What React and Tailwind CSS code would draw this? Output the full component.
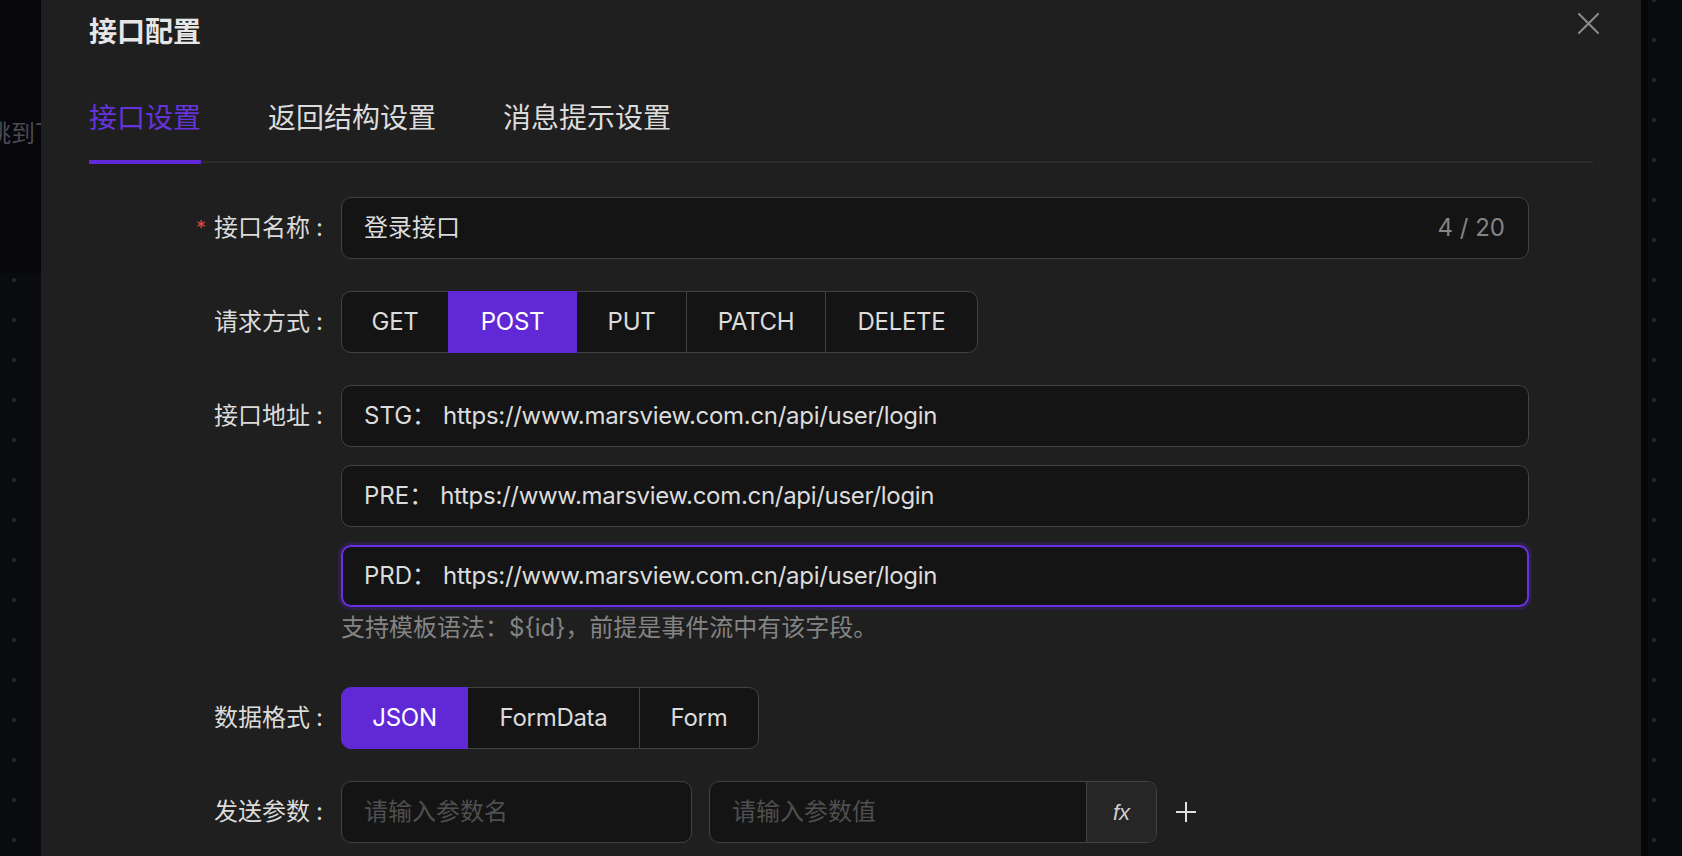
import React from "react";

const FONT = { fontFamily: '"Inter", "Noto Sans CJK SC", sans-serif' };

function Label({ children, required }) {
  return (
    <div className="w-[234px] h-[62px] shrink-0 flex items-center justify-end text-[24px] leading-[36px] text-[#dcdcdc]">
      {required && (
        <span className="text-[#dc4446] text-[20px] mr-[8px] leading-none">*</span>
      )}
      <span>{children}</span>
      <span className="ml-[6px]">:</span>
    </div>
  );
}

function Segmented({ items, active, widths }) {
  return (
    <div className="flex h-[62px]">
      {items.map((it, i) => {
        const sel = it === active;
        const first = i === 0;
        const last = i === items.length - 1;
        return (
          <div
            key={it}
            className={
              "h-[62px] flex items-center justify-center border text-[24px] tracking-[-0.3px] " +
              (first ? "rounded-l-[10px] " : "ml-[-1px] ") +
              (last ? "rounded-r-[10px] " : "") +
              (sel
                ? "relative z-10 bg-[#6129d6] border-[#6129d6] text-white "
                : "bg-[#141414] border-[#424242] text-[#dcdcdc] ")
            }
            style={{ width: widths[i] }}
          >
            {it}
          </div>
        );
      })}
    </div>
  );
}

function UrlInput({ prefix, focused }) {
  return (
    <div
      className={
        "h-[62px] w-[1188px] rounded-[10px] bg-[#141414] flex items-center text-[24px] text-[#dcdcdc] " +
        (focused
          ? "border-2 border-[#6a2fe6] px-[21px] shadow-[0_0_0_3px_rgba(106,47,230,0.18)]"
          : "border border-[#424242] px-[22px]")
      }
    >
      <span className="mr-[7px]">{prefix}：</span>
      <span className="tracking-[-0.3px]">https://www.marsview.com.cn/api/user/login</span>
    </div>
  );
}

export default function App() {
  return (
    <div
      className="w-[1682px] h-[856px] flex overflow-hidden bg-[#0a0b0f] bg-[radial-gradient(circle,#25262b_1.6px,transparent_2.2px)] bg-[length:40px_40px] bg-[position:-6px_-20px]"
      style={FONT}
    >
      {/* left background strip */}
      <div className="w-[41px] shrink-0 flex flex-col">
        <div className="h-[273px] bg-[#07060b] overflow-hidden pt-[116px]">
          <div className="whitespace-nowrap ml-[-13px] text-[24px] leading-[36px] text-[#4a4a4f]">
            跳到下一步
          </div>
        </div>
      </div>

      {/* modal */}
      <div className="relative w-[1600px] shrink-0 h-full bg-[#1f1f1f] px-[48px]">
        <button className="absolute top-[13px] right-[42px] w-[21px] h-[21px]">
          <svg width="21" height="21" viewBox="0 0 21 21" fill="none">
            <path d="M1 1L20 20M20 1L1 20" stroke="#8c8c8c" strokeWidth="2" strokeLinecap="round" />
          </svg>
        </button>

        <div className="pt-[12px] h-[52px] text-[28px] leading-[40px] font-semibold text-[#e6e6e6]">
          接口配置
        </div>

        {/* tabs */}
        <div className="mt-[46px] flex gap-[67px] border-b-2 border-[#2b2b2b] text-[28px] leading-[40px]">
          <div className="relative pb-[23px] text-[#6633dd]">
            接口设置
            <div className="absolute left-0 right-0 bottom-[-3px] h-[4px] bg-[#6129d6]" />
          </div>
          <div className="pb-[23px] text-[#dcdcdc]">返回结构设置</div>
          <div className="pb-[23px] text-[#dcdcdc]">消息提示设置</div>
        </div>

        {/* form */}
        <div className="mt-[34px] flex flex-col">
          {/* row 1 */}
          <div className="flex items-center gap-[18px]">
            <Label required>接口名称</Label>
            <div className="h-[62px] w-[1188px] rounded-[10px] border border-[#424242] bg-[#141414] flex items-center justify-between pl-[22px] pr-[23px] text-[24px]">
              <span className="text-[#dcdcdc]">登录接口</span>
              <span className="text-[#848484]">4 / 20</span>
            </div>
          </div>

          {/* row 2 */}
          <div className="mt-[32px] flex items-center gap-[18px]">
            <Label>请求方式</Label>
            <Segmented
              items={["GET", "POST", "PUT", "PATCH", "DELETE"]}
              active="POST"
              widths={[108, 129, 111, 140, 153]}
            />
          </div>

          {/* row 3 */}
          <div className="mt-[32px] flex items-start gap-[18px]">
            <Label>接口地址</Label>
            <div className="flex flex-col">
              <div className="flex flex-col gap-[18px]">
                <UrlInput prefix="STG" />
                <UrlInput prefix="PRE" />
                <UrlInput prefix="PRD" focused />
              </div>
              <div className="mt-[3px] text-[24px] leading-[36px] text-[#848484]">
                支持模板语法：${"{id}"}，前提是事件流中有该字段。
              </div>
            </div>
          </div>

          {/* row 4 */}
          <div className="mt-[41px] flex items-center gap-[18px]">
            <Label>数据格式</Label>
            <Segmented
              items={["JSON", "FormData", "Form"]}
              active="JSON"
              widths={[127, 173, 120]}
            />
          </div>

          {/* row 5 */}
          <div className="mt-[32px] flex items-center gap-[18px]">
            <Label>发送参数</Label>
            <div className="flex items-center">
              <div className="h-[62px] w-[351px] rounded-[10px] border border-[#424242] bg-[#141414] flex items-center px-[22px] text-[24px] text-[#4f4f4f]">
                请输入参数名
              </div>
              <div className="ml-[17px] h-[62px] w-[448px] rounded-[10px] border border-[#424242] bg-[#141414] flex overflow-hidden">
                <div className="flex-1 flex items-center px-[22px] text-[24px] text-[#4f4f4f]">
                  请输入参数值
                </div>
                <div className="w-[70px] border-l border-[#424242] bg-[#262626] flex items-center justify-center italic text-[#cfcfcf]">
                  <span className="text-[22px]" style={{ fontFamily: '"Liberation Sans", sans-serif' }}>fx</span>
                </div>
              </div>
              <svg className="ml-[19px]" width="20" height="20" viewBox="0 0 20 20" fill="none">
                <path d="M10 0V20M0 10H20" stroke="#e0e0e0" strokeWidth="2" />
              </svg>
            </div>
          </div>
        </div>
      </div>

      {/* right background strip */}
      <div className="flex-1 flex">
        <div className="w-[7px] h-full bg-[#06070a]" />
      </div>
    </div>
  );
}
